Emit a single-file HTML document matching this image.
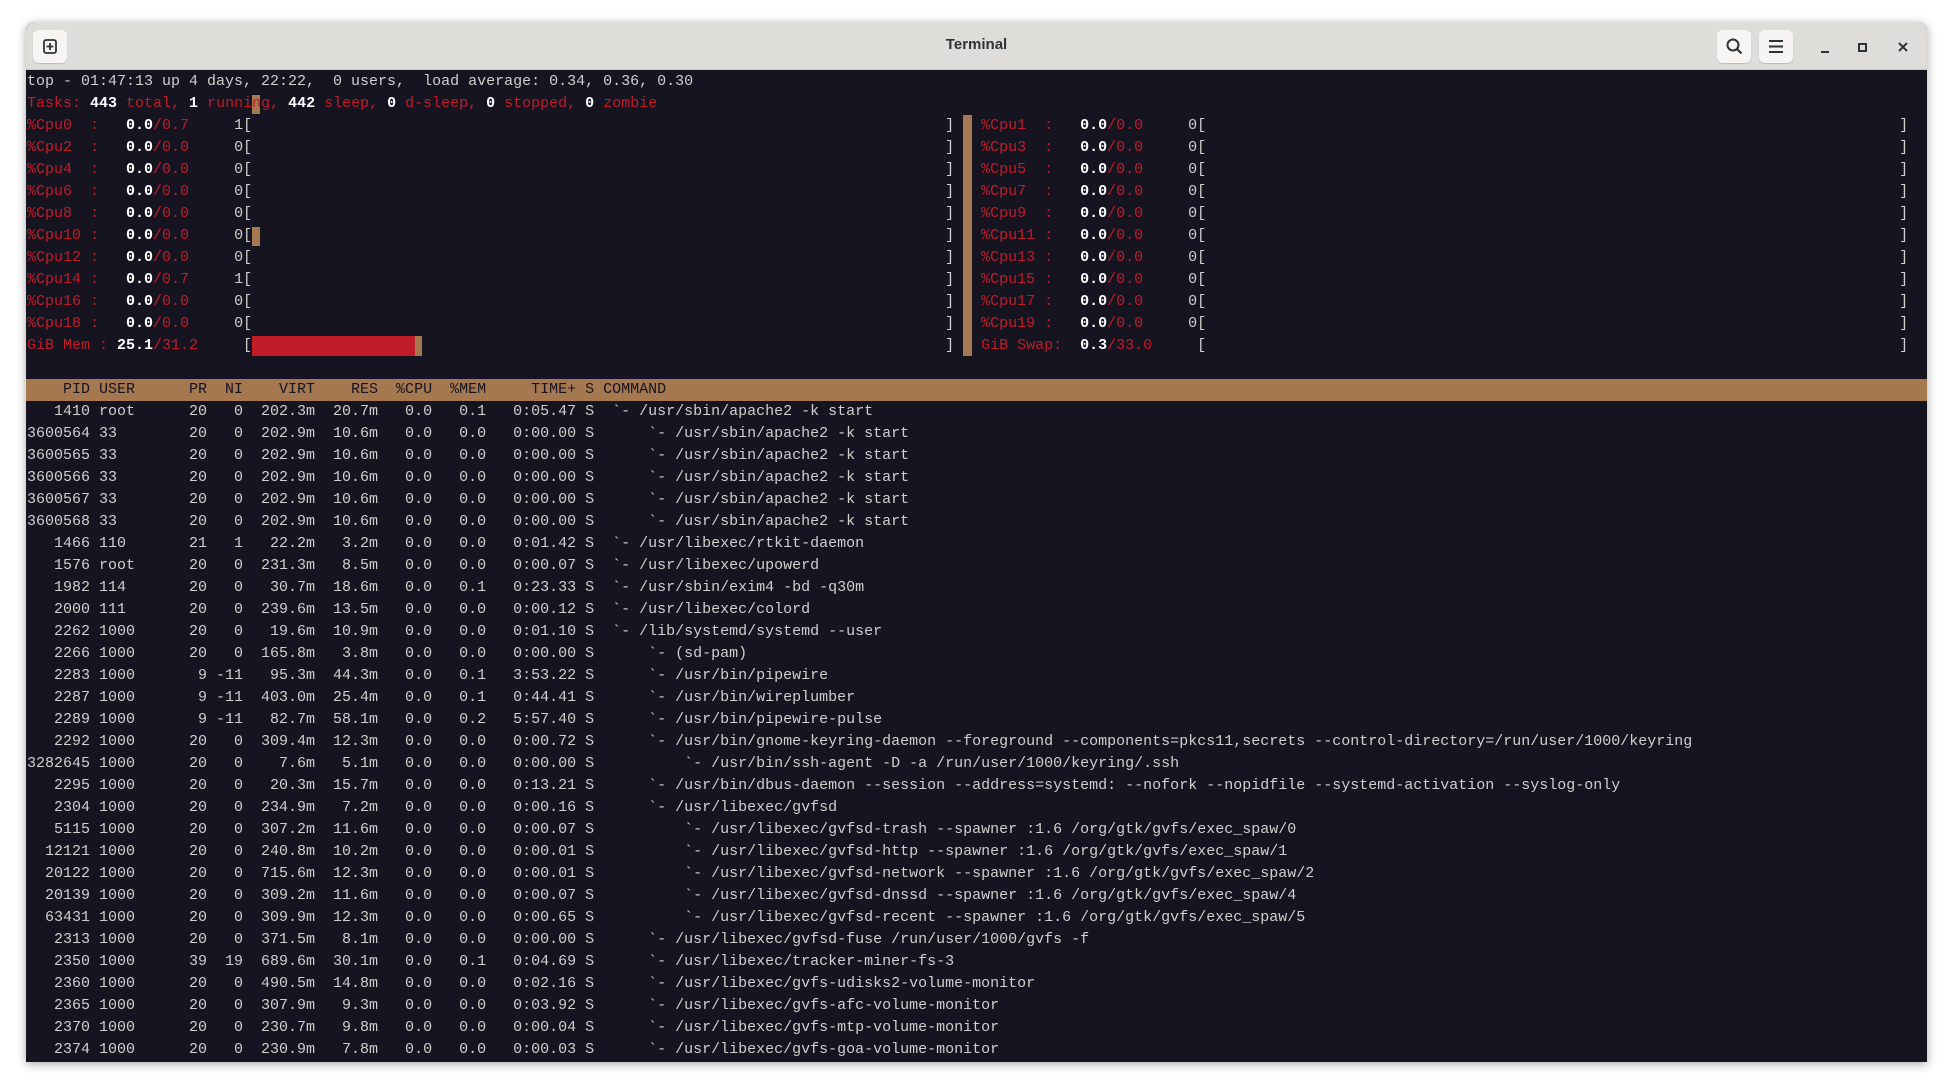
<!DOCTYPE html>
<html><head><meta charset="utf-8"><style>
html,body{margin:0;padding:0;background:#fff;width:1953px;height:1091px;overflow:hidden}
.win{position:absolute;left:26px;top:22px;width:1901px;height:1040px;background:#171421;border-radius:9px 9px 0 0;box-shadow:0 2px 10px rgba(0,0,0,.35);overflow:hidden}
.tb{position:absolute;left:0;top:0;width:1901px;height:47px;background:#deddda;border-bottom:1px solid #c8c6c3}
.title{position:absolute;left:0;width:100%;top:14px;text-align:center;font:bold 15px "Liberation Sans",sans-serif;color:#2e3436}
.btn{position:absolute;top:8px;width:34px;height:33px;background:#f6f5f4;border-radius:6px;box-shadow:0 1px 1px rgba(0,0,0,.15)}
pre{position:absolute;left:1px;top:49px;margin:0;font:15px/22px "Liberation Mono",monospace;color:#d0cfcc;white-space:pre}
.r{color:#c01c28}.w{color:#fff;font-weight:bold}
.b{display:inline-block;width:693px}.g{display:inline-block;width:27px}
.hd{position:absolute;left:0;top:357px;width:1901px;height:22px;background:#a57850}
.hd+pre{}
.blk{position:absolute;background:#a57850}
</style></head><body>
<div class="win">
<div class="tb">
 <div class="btn" style="left:7px"><svg width="34" height="33" viewBox="0 0 34 33"><rect x="11" y="10" width="12" height="13" rx="2" fill="none" stroke="#2e3436" stroke-width="1.8"/><path d="M17 13v7M13.5 16.5h7" stroke="#2e3436" stroke-width="1.8"/></svg></div>
 <div class="title">Terminal</div>
 <div class="btn" style="left:1691px"><svg width="34" height="33" viewBox="0 0 34 33"><circle cx="16" cy="15" r="5.5" fill="none" stroke="#2e3436" stroke-width="2"/><path d="M20 19l4.5 4.5" stroke="#2e3436" stroke-width="2.2"/></svg></div>
 <div class="btn" style="left:1733px"><svg width="34" height="33" viewBox="0 0 34 33"><path d="M10 11h14M10 16.5h14M10 22h14" stroke="#2e3436" stroke-width="2"/></svg></div>
 <svg style="position:absolute;left:1790px;top:16px" width="20" height="20"><path d="M5 14h8" stroke="#2e3436" stroke-width="2"/></svg>
 <svg style="position:absolute;left:1827px;top:16px" width="20" height="20"><rect x="6" y="6" width="7" height="7" fill="none" stroke="#2e3436" stroke-width="2"/></svg>
 <svg style="position:absolute;left:1868px;top:16px" width="20" height="20"><path d="M5 5l8 8M13 5l-8 8" stroke="#2e3436" stroke-width="2"/></svg>
</div>
<div class="hd"></div>
<div class="blk" style="left:937px;top:93px;width:9px;height:241px"></div>
<div class="blk" style="left:226px;top:73px;width:8px;height:19px"></div>
<div class="blk" style="left:226px;top:205px;width:8px;height:19px"></div>
<div style="position:absolute;left:226px;top:314px;width:163px;height:20px;background:#c01c28"></div>
<div class="blk" style="left:389px;top:314px;width:7px;height:20px"></div>
<pre>top - 01:47:13 up 4 days, 22:22,  0 users,  load average: 0.34, 0.36, 0.30
<span class="r">Tasks: </span><span class="w">443 </span><span class="r">total, </span><span class="w">1 </span><span class="r">running, </span><span class="w">442 </span><span class="r">sleep, </span><span class="w">0 </span><span class="r">d-sleep, </span><span class="w">0 </span><span class="r">stopped, </span><span class="w">0 </span><span class="r">zombie</span>
<span class="r">%Cpu0  :   </span><span class="w">0.0</span><span class="r">/0.7</span>     1[<span class="b"></span>]<span class="g"></span><span class="r">%Cpu1  :   </span><span class="w">0.0</span><span class="r">/0.0</span>     0[<span class="b"></span>]
<span class="r">%Cpu2  :   </span><span class="w">0.0</span><span class="r">/0.0</span>     0[<span class="b"></span>]<span class="g"></span><span class="r">%Cpu3  :   </span><span class="w">0.0</span><span class="r">/0.0</span>     0[<span class="b"></span>]
<span class="r">%Cpu4  :   </span><span class="w">0.0</span><span class="r">/0.0</span>     0[<span class="b"></span>]<span class="g"></span><span class="r">%Cpu5  :   </span><span class="w">0.0</span><span class="r">/0.0</span>     0[<span class="b"></span>]
<span class="r">%Cpu6  :   </span><span class="w">0.0</span><span class="r">/0.0</span>     0[<span class="b"></span>]<span class="g"></span><span class="r">%Cpu7  :   </span><span class="w">0.0</span><span class="r">/0.0</span>     0[<span class="b"></span>]
<span class="r">%Cpu8  :   </span><span class="w">0.0</span><span class="r">/0.0</span>     0[<span class="b"></span>]<span class="g"></span><span class="r">%Cpu9  :   </span><span class="w">0.0</span><span class="r">/0.0</span>     0[<span class="b"></span>]
<span class="r">%Cpu10 :   </span><span class="w">0.0</span><span class="r">/0.0</span>     0[<span class="b"></span>]<span class="g"></span><span class="r">%Cpu11 :   </span><span class="w">0.0</span><span class="r">/0.0</span>     0[<span class="b"></span>]
<span class="r">%Cpu12 :   </span><span class="w">0.0</span><span class="r">/0.0</span>     0[<span class="b"></span>]<span class="g"></span><span class="r">%Cpu13 :   </span><span class="w">0.0</span><span class="r">/0.0</span>     0[<span class="b"></span>]
<span class="r">%Cpu14 :   </span><span class="w">0.0</span><span class="r">/0.7</span>     1[<span class="b"></span>]<span class="g"></span><span class="r">%Cpu15 :   </span><span class="w">0.0</span><span class="r">/0.0</span>     0[<span class="b"></span>]
<span class="r">%Cpu16 :   </span><span class="w">0.0</span><span class="r">/0.0</span>     0[<span class="b"></span>]<span class="g"></span><span class="r">%Cpu17 :   </span><span class="w">0.0</span><span class="r">/0.0</span>     0[<span class="b"></span>]
<span class="r">%Cpu18 :   </span><span class="w">0.0</span><span class="r">/0.0</span>     0[<span class="b"></span>]<span class="g"></span><span class="r">%Cpu19 :   </span><span class="w">0.0</span><span class="r">/0.0</span>     0[<span class="b"></span>]
<span class="r">GiB Mem : </span><span class="w">25.1</span><span class="r">/31.2</span>     [<span class="b"></span>]<span class="g"></span><span class="r">GiB Swap:  </span><span class="w">0.3</span><span class="r">/33.0</span>     [<span class="b"></span>]

<span style="color:#171421">    PID USER      PR  NI    VIRT    RES  %CPU  %MEM     TIME+ S COMMAND</span>
   1410 root      20   0  202.3m  20.7m   0.0   0.1   0:05.47 S  `- /usr/sbin/apache2 -k start
3600564 33        20   0  202.9m  10.6m   0.0   0.0   0:00.00 S      `- /usr/sbin/apache2 -k start
3600565 33        20   0  202.9m  10.6m   0.0   0.0   0:00.00 S      `- /usr/sbin/apache2 -k start
3600566 33        20   0  202.9m  10.6m   0.0   0.0   0:00.00 S      `- /usr/sbin/apache2 -k start
3600567 33        20   0  202.9m  10.6m   0.0   0.0   0:00.00 S      `- /usr/sbin/apache2 -k start
3600568 33        20   0  202.9m  10.6m   0.0   0.0   0:00.00 S      `- /usr/sbin/apache2 -k start
   1466 110       21   1   22.2m   3.2m   0.0   0.0   0:01.42 S  `- /usr/libexec/rtkit-daemon
   1576 root      20   0  231.3m   8.5m   0.0   0.0   0:00.07 S  `- /usr/libexec/upowerd
   1982 114       20   0   30.7m  18.6m   0.0   0.1   0:23.33 S  `- /usr/sbin/exim4 -bd -q30m
   2000 111       20   0  239.6m  13.5m   0.0   0.0   0:00.12 S  `- /usr/libexec/colord
   2262 1000      20   0   19.6m  10.9m   0.0   0.0   0:01.10 S  `- /lib/systemd/systemd --user
   2266 1000      20   0  165.8m   3.8m   0.0   0.0   0:00.00 S      `- (sd-pam)
   2283 1000       9 -11   95.3m  44.3m   0.0   0.1   3:53.22 S      `- /usr/bin/pipewire
   2287 1000       9 -11  403.0m  25.4m   0.0   0.1   0:44.41 S      `- /usr/bin/wireplumber
   2289 1000       9 -11   82.7m  58.1m   0.0   0.2   5:57.40 S      `- /usr/bin/pipewire-pulse
   2292 1000      20   0  309.4m  12.3m   0.0   0.0   0:00.72 S      `- /usr/bin/gnome-keyring-daemon --foreground --components=pkcs11,secrets --control-directory=/run/user/1000/keyring
3282645 1000      20   0    7.6m   5.1m   0.0   0.0   0:00.00 S          `- /usr/bin/ssh-agent -D -a /run/user/1000/keyring/.ssh
   2295 1000      20   0   20.3m  15.7m   0.0   0.0   0:13.21 S      `- /usr/bin/dbus-daemon --session --address=systemd: --nofork --nopidfile --systemd-activation --syslog-only
   2304 1000      20   0  234.9m   7.2m   0.0   0.0   0:00.16 S      `- /usr/libexec/gvfsd
   5115 1000      20   0  307.2m  11.6m   0.0   0.0   0:00.07 S          `- /usr/libexec/gvfsd-trash --spawner :1.6 /org/gtk/gvfs/exec_spaw/0
  12121 1000      20   0  240.8m  10.2m   0.0   0.0   0:00.01 S          `- /usr/libexec/gvfsd-http --spawner :1.6 /org/gtk/gvfs/exec_spaw/1
  20122 1000      20   0  715.6m  12.3m   0.0   0.0   0:00.01 S          `- /usr/libexec/gvfsd-network --spawner :1.6 /org/gtk/gvfs/exec_spaw/2
  20139 1000      20   0  309.2m  11.6m   0.0   0.0   0:00.07 S          `- /usr/libexec/gvfsd-dnssd --spawner :1.6 /org/gtk/gvfs/exec_spaw/4
  63431 1000      20   0  309.9m  12.3m   0.0   0.0   0:00.65 S          `- /usr/libexec/gvfsd-recent --spawner :1.6 /org/gtk/gvfs/exec_spaw/5
   2313 1000      20   0  371.5m   8.1m   0.0   0.0   0:00.00 S      `- /usr/libexec/gvfsd-fuse /run/user/1000/gvfs -f
   2350 1000      39  19  689.6m  30.1m   0.0   0.1   0:04.69 S      `- /usr/libexec/tracker-miner-fs-3
   2360 1000      20   0  490.5m  14.8m   0.0   0.0   0:02.16 S      `- /usr/libexec/gvfs-udisks2-volume-monitor
   2365 1000      20   0  307.9m   9.3m   0.0   0.0   0:03.92 S      `- /usr/libexec/gvfs-afc-volume-monitor
   2370 1000      20   0  230.7m   9.8m   0.0   0.0   0:00.04 S      `- /usr/libexec/gvfs-mtp-volume-monitor
   2374 1000      20   0  230.9m   7.8m   0.0   0.0   0:00.03 S      `- /usr/libexec/gvfs-goa-volume-monitor</pre>
</div>
</body></html>
